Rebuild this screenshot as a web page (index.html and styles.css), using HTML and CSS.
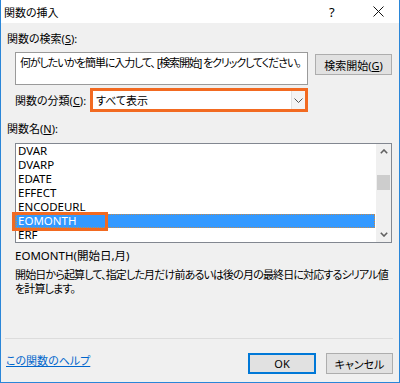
FILE: index.html
```html
<!DOCTYPE html>
<html lang="ja">
<head>
  <meta charset="UTF-8" />
  <title>関数の挿入</title>
  <link rel="stylesheet" href="styles.css">
</head>
<body>
  <div class="window">
    <div class="titlebar">
      <span class="title">関数の挿入</span>
      <span class="help">?</span>
      <span class="close">
        <svg width="11" height="11" viewBox="0 0 11 11"><path d="M0.5 0.5 L10.5 10.5 M10.5 0.5 L0.5 10.5" stroke="#111" stroke-width="1" fill="none"/></svg>
      </span>
    </div>

    <div class="content">
      <div class="label">関数の検索(<u>S</u>):</div>
      <div class="search-row">
        <div class="search-box">何がしたいかを簡単に入力して、 [検索開始] をクリックしてください。</div>
        <button class="btn search-btn">検索開始(<u>G</u>)</button>
      </div>

      <div class="cat-row">
        <span class="cat-label">関数の分類(<u>C</u>):</span>
        <div class="mark select-mark">
          <div class="select">
            <span class="select-value">すべて表示</span>
            <span class="select-arrow">
              <svg width="9" height="5" viewBox="0 0 9 5"><path d="M0.5 0.5 L4.5 4.5 L8.5 0.5" stroke="#555" stroke-width="1" fill="none"/></svg>
            </span>
          </div>
        </div>
      </div>

      <div class="label list-label">関数名(<u>N</u>):</div>
      <div class="listbox">
        <ul class="items">
          <li>DVAR</li>
          <li>DVARP</li>
          <li>EDATE</li>
          <li>EFFECT</li>
          <li>ENCODEURL</li>
          <li class="selected">EOMONTH</li>
          <li>ERF</li>
        </ul>
        <div class="scrollbar">
          <span class="arrow">
            <svg width="8" height="5" viewBox="0 0 8 5"><path d="M0.8 4.2 L4 1 L7.2 4.2" stroke="#606060" stroke-width="1.6" fill="none"/></svg>
          </span>
          <div class="track"><div class="thumb"></div></div>
          <span class="arrow">
            <svg width="8" height="5" viewBox="0 0 8 5"><path d="M0.8 0.8 L4 4 L7.2 0.8" stroke="#606060" stroke-width="1.6" fill="none"/></svg>
          </span>
        </div>
        <div class="mark item-mark"></div>
      </div>

      <div class="syntax">EOMONTH(開始日,月)</div>
      <p class="desc">開始日から起算して、指定した月だけ前あるいは後の月の最終日に対応するシリアル値を計算します。</p>
    </div>

    <div class="footer">
      <a class="help-link" href="#">この関数のヘルプ</a>
      <div class="buttons">
        <button class="btn ok">OK</button>
        <button class="btn cancel">キャンセル</button>
      </div>
    </div>
  </div>
</body>
</html>
```

FILE: styles.css
```css
body {
  margin: 0;
  font-family: "Noto Sans", "Noto Sans CJK JP", sans-serif;
  font-size: 11px;
  font-feature-settings: "palt";
  color: #000;
}
.window {
  width: 400px;
  height: 383px;
  box-sizing: border-box;
  border: 1px solid #2a86d8;
  border-top: none;
  background: #f0f0f0;
  display: flex;
  flex-direction: column;
}
.titlebar {
  height: 23px;
  background: #fff;
  display: flex;
  align-items: center;
  padding-left: 3px;
}
.title {
  flex: 1;
}
.help {
  width: 14px;
  margin-right: 30px;
  font-size: 13px;
}
.close {
  width: 11px;
  height: 11px;
  margin-right: 15px;
  display: flex;
}
.content {
  padding: 0 7px 0 6px;
}
.label {
  margin-top: 9px;
  line-height: 14px;
}
.search-row {
  display: flex;
  gap: 7px;
  margin: 6px 0 0 8px;
  align-items: flex-start;
}
.search-box {
  width: 293px;
  height: 33px;
  box-sizing: border-box;
  background: #fff;
  border: 1px solid #9a9a9a;
  padding: 3px 0 0 4px;
  line-height: 14px;
  letter-spacing: -1.1px;
  white-space: nowrap;
  overflow: hidden;
}
.btn {
  font: inherit;
  font-feature-settings: "palt";
  height: 21px;
  padding: 0;
  background: #e1e1e1;
  border: 1px solid #adadad;
  color: #000;
}
.search-btn {
  width: 77px;
  margin-top: 2px;
}
.cat-row {
  display: flex;
  align-items: center;
  margin: 3px 0 0 8px;
}
.cat-label {
  width: 75px;
  white-space: nowrap;
}
.mark {
  border: 3px solid #f26a21;
  box-sizing: border-box;
}
.select-mark {
  width: 218px;
  height: 24px;
}
.select {
  height: 100%;
  background: #fff;
  display: flex;
  align-items: center;
}
.select-value {
  flex: 1;
  padding-left: 3px;
}
.select-arrow {
  width: 13px;
  height: 100%;
  background: #f4f4f4;
  border-left: 1px solid #e2e2e2;
  display: flex;
  align-items: center;
  justify-content: center;
}
.list-label {
  margin-top: 10px;
}
.listbox {
  position: relative;
  display: flex;
  width: 377px;
  height: 100px;
  box-sizing: border-box;
  margin: 7px 0 0 8px;
  background: #fff;
  border: 1px solid #828790;
}
.items {
  flex: 1;
  list-style: none;
  margin: 0;
  padding: 0;
  font-size: 11.5px;
}
.items li {
  height: 14px;
  line-height: 14px;
  padding-left: 2px;
}
.items li.selected {
  background: #3399ff;
  color: #fff;
  outline: 1px dotted #c68a4a;
  outline-offset: -1px;
  margin-right: 1px;
}
.scrollbar {
  width: 15px;
  background: #f0f0f0;
  display: flex;
  flex-direction: column;
}
.arrow {
  height: 15px;
  display: flex;
  align-items: center;
  justify-content: center;
}
.track {
  flex: 1;
  padding-top: 16px;
}
.thumb {
  height: 15px;
  background: #cdcdcd;
  margin: 0 1px;
}
.item-mark {
  position: absolute;
  left: -4px;
  top: 68px;
  width: 96px;
  height: 19px;
}
.syntax {
  margin: 6px 0 0 8px;
  line-height: 14px;
  font-size: 11.5px;
}
.desc {
  margin: 5px 0 0 8px;
  line-height: 14px;
  letter-spacing: -0.85px;
}
.footer {
  margin-top: auto;
  margin-left: 4px;
  margin-right: 6px;
  border-top: 1px solid #dcdcdc;
  display: flex;
  justify-content: space-between;
  padding: 14px 0 8px 1px;
}
.help-link {
  color: #0066cc;
  margin-top: 1px;
  line-height: 14px;
}
.buttons {
  display: flex;
  gap: 10px;
}
.ok {
  width: 68px;
  border: 2px solid #0078d7;
}
.cancel {
  width: 67px;
}
```
